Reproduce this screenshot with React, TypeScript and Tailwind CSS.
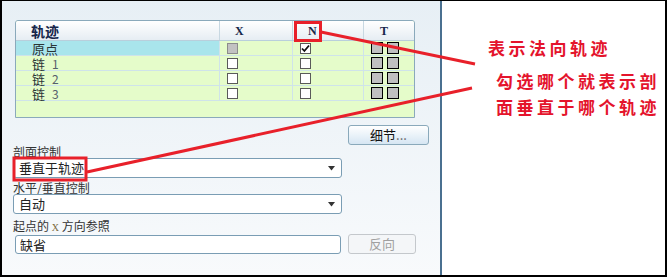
import React from 'react'

const rows = [
    { name: '原点', num: '', active: true },
    { name: '链', num: '1', active: false },
    { name: '链', num: '2', active: false },
    { name: '链', num: '3', active: false },
]

const Box = ({ disabled, checked }: { disabled?: boolean; checked?: boolean }) => (
    <div
        className={
            'w-[11px] h-[11px] border flex items-center justify-center ' +
            (disabled ? 'bg-[#c2c2c2] border-[#8c8c8c]' : 'bg-white border-[#5a5a5a]')
        }
    >
        {checked && (
            <svg width="9" height="9" viewBox="0 0 9 9">
                <path d="M1 4.5 L3.4 7 L8 1.5" stroke="#111" strokeWidth="1.8" fill="none" />
            </svg>
        )}
    </div>
)

const Square = () => <div className="w-[12px] h-[12px] bg-[#c0c0c0] border border-black" />

const Select = ({ value }: { value: string }) => (
    <div className="w-[329px] h-[20px] ml-[11px] bg-white border border-[#7a9db4] rounded-[3px] flex items-center justify-between pl-[5px] pr-[6px] text-[13px] text-[#222]">
        <span>{value}</span>
        <svg width="7" height="5" viewBox="0 0 7 5">
            <path d="M0 0 L7 0 L3.5 4.5 Z" fill="#333" />
        </svg>
    </div>
)

const App = () => {
    return (
        <div
            className="relative w-[667px] h-[277px] flex border-t border-l-2 border-r-2 border-b-2 border-black bg-white overflow-hidden"
            style={{ fontFamily: '"Noto Sans CJK SC", "Liberation Sans", sans-serif' }}
        >
            {/* dialog panel */}
            <div className="w-[440px] h-full border-r-2 border-[#4a7090] bg-gradient-to-b from-[#e7eff5] to-[#f8fafc] flex flex-col">
                {/* table */}
                <div className="ml-[13px] mt-[19px] w-[400px] h-[98px] border border-[#8aa9bb] rounded-t-[3px] bg-[#e5fcca] overflow-hidden">
                    <div className="h-[20px] flex border-b border-[#b9cfdc] bg-gradient-to-b from-white to-[#e6edf3] text-[#16264a] font-bold">
                        <div className="w-[204px] pl-[15px] text-[14px] leading-[20px] border-r border-[#c8d8e2]">轨迹</div>
                        <div className="w-[73px] pl-[15px] text-[12px] leading-[20px] border-r border-[#c8d8e2]" style={{ fontFamily: '"Liberation Serif", serif' }}>X</div>
                        <div className="w-[71px] pl-[15px] text-[12px] leading-[20px] border-r border-[#c8d8e2]" style={{ fontFamily: '"Liberation Serif", serif' }}>N</div>
                        <div className="flex-1 pl-[16px] text-[12px] leading-[20px]" style={{ fontFamily: '"Liberation Serif", serif' }}>T</div>
                    </div>
                    {rows.map((r, i) => (
                        <div key={i} className="h-[15px] flex border-b border-[#cfe3ea]">
                            <div className={'w-[204px] pl-[16px] flex items-center text-[13px] leading-[13px] text-[#2a3436] border-r border-[#cfe3ea] ' + (r.active ? 'bg-[#a9e5ec]' : '')}>
                                <span>{r.name}</span>
                                {r.num && <span className="ml-[7px] text-[12px] leading-[13px] text-[#56606a]">{r.num}</span>}
                            </div>
                            <div className="w-[73px] pl-[7px] flex items-center border-r border-[#cfe3ea]">
                                <Box disabled={r.active} />
                            </div>
                            <div className="w-[71px] pl-[7px] flex items-center border-r border-[#cfe3ea]">
                                <Box checked={r.active} />
                            </div>
                            <div className="flex-1 pl-[7px] flex items-center gap-[4px]">
                                <Square />
                                <Square />
                            </div>
                        </div>
                    ))}
                </div>

                <div className="ml-[346px] mt-[7px] w-[81px] h-[20px] border border-[#8aa9bb] rounded-[3px] bg-gradient-to-b from-white to-[#d6e6f3] text-[13px] leading-[18px] text-[#111] text-center">
                    细节<span className="text-[#666]">...</span>
                </div>

                <div className="ml-[11px] mt-[0px] h-[13px] text-[12px] leading-[13px] text-[#333]">剖面控制</div>
                <Select value="垂直于轨迹" />
                <div className="ml-[11px] mt-[3px] h-[13px] text-[12px] leading-[13px] text-[#333]">水平/垂直控制</div>
                <Select value="自动" />
                <div className="ml-[11px] mt-[5px] h-[13px] text-[12px] leading-[13px] text-[#333]">
                    起点的 <span className="text-[10px] text-[#7a6a40]" style={{ fontFamily: '"Liberation Serif", serif' }}>X</span> 方向参照
                </div>
                <div className="mt-[2px] flex items-center">
                    <div className="ml-[13px] w-[326px] h-[19px] bg-white border border-[#7a9db4] rounded-[3px] pl-[4px] text-[13px] leading-[17px] text-[#222]">缺省</div>
                    <div className="ml-[7px] w-[68px] h-[20px] border border-[#c4c8cc] rounded-[3px] bg-[#f4f6f8] text-[13px] leading-[18px] text-[#a0a0a0] text-center">反向</div>
                </div>
            </div>

            {/* annotation text */}
            <div className="flex-1 flex flex-col text-[17px] leading-[20px] font-semibold text-[#e4142c] tracking-[3.5px]">
                <div className="ml-[46px] mt-[37px]">表示法向轨迹</div>
                <div className="ml-[54px] mt-[13px]">勾选哪个就表示剖</div>
                <div className="ml-[54px] mt-[6px]">面垂直于哪个轨迹</div>
            </div>

            {/* red callouts */}
            <svg className="absolute left-[-2px] top-[-1px] pointer-events-none" width="667" height="277">
                <rect x="295.5" y="22.5" width="25" height="18" fill="none" stroke="#e8202a" strokeWidth="3" />
                <rect x="14" y="158" width="72" height="22" fill="none" stroke="#e8202a" strokeWidth="3" />
                <line x1="321" y1="32" x2="475" y2="64" stroke="#e8202a" strokeWidth="3" />
                <line x1="87" y1="172" x2="472" y2="88" stroke="#e8202a" strokeWidth="3" />
            </svg>
        </div>
    )
}

export default App
